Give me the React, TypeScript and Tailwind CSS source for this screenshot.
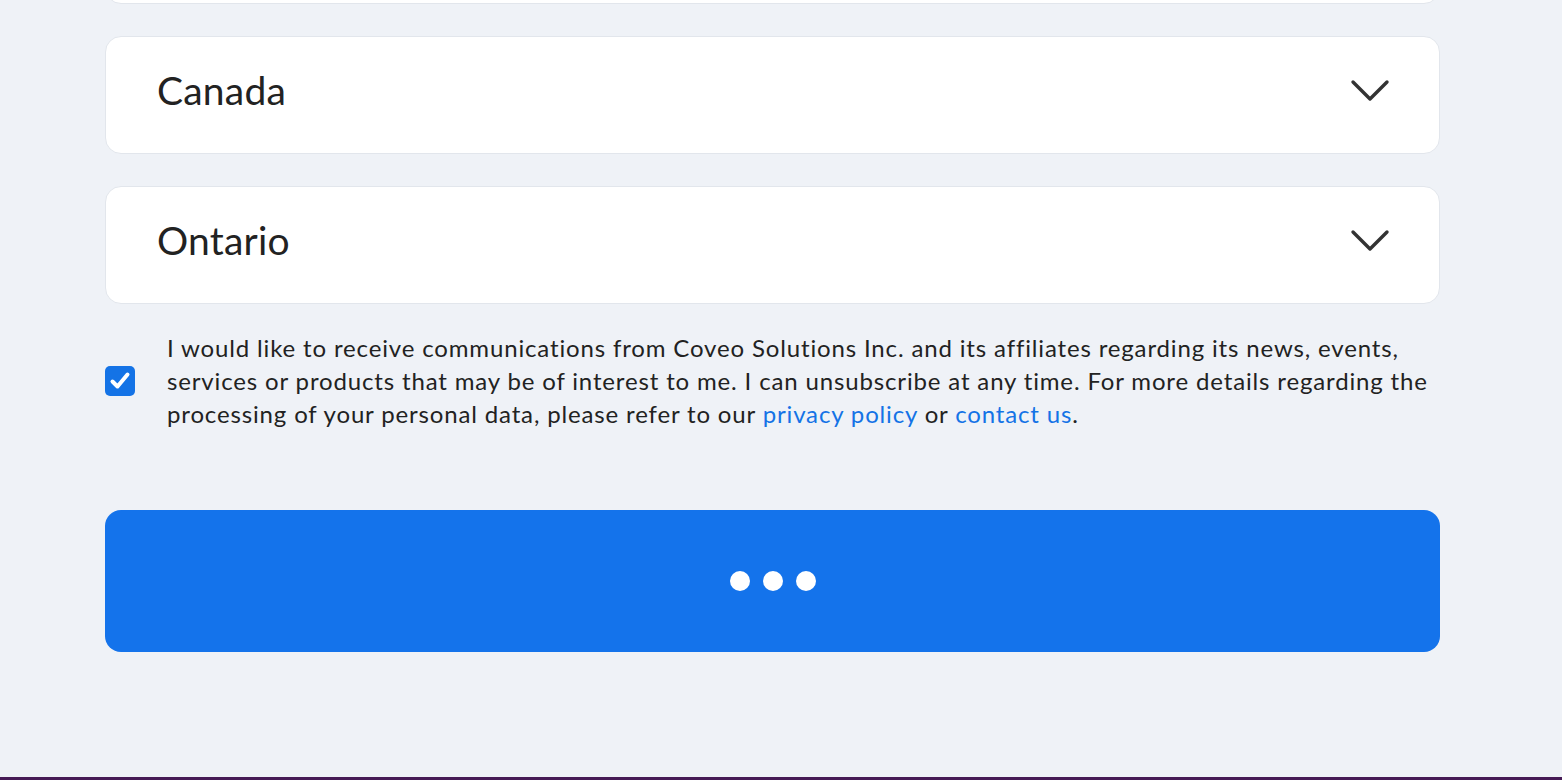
import React from "react";

function Chevron() {
  return (
    <svg width="40" height="24" viewBox="0 0 40 24" fill="none" className="shrink-0">
      <path d="M3 3 L20 20 L37 3" stroke="#333333" strokeWidth="3.4" strokeLinecap="round" strokeLinejoin="round" />
    </svg>
  );
}

function SelectCard({ label }: { label: string }) {
  return (
    <div className="h-[118px] rounded-[16px] border border-[#e2e6ec] bg-white flex items-center justify-between pl-[51px] pr-[49px] pb-[9px]">
      <span className="text-[39px] text-[#222222] leading-none tracking-[0.2px]">{label}</span>
      <Chevron />
    </div>
  );
}

export default function App() {
  return (
    <div
      className="w-full h-[780px] overflow-hidden bg-[#eff2f7] flex flex-col"
      style={{ fontFamily: "Lato, 'Noto Sans', sans-serif" }}
    >
      <div className="flex-1 w-[1335px] ml-[105px] flex flex-col">
        <div className="h-[118px] -mt-[114px] rounded-[16px] border border-[#e2e6ec] bg-white" />
        <div className="mt-[32px] flex flex-col gap-[32px]">
          <SelectCard label="Canada" />
          <SelectCard label="Ontario" />
        </div>
        <div className="mt-[27px] flex items-center gap-[32px]">
          <div className="w-[30px] h-[30px] rounded-[5px] bg-[#1473e6] flex items-center justify-center shrink-0">
            <svg width="24" height="24" viewBox="0 0 24 24" fill="none">
              <path d="M4.5 12.5 L9.5 17.5 L19.5 5.5" stroke="white" strokeWidth="4" strokeLinecap="round" strokeLinejoin="round" />
            </svg>
          </div>
          <p className="text-[24px] leading-[33px] tracking-[0.85px] text-[#222222]">
            I would like to receive communications from Coveo Solutions Inc. and its affiliates regarding its news, events, services or products that may be of interest to me. I can unsubscribe at any time. For more details regarding the processing of your personal data, please refer to our{" "}
            <a className="text-[#1473e6]">privacy policy</a> or <a className="text-[#1473e6]">contact us</a>.
          </p>
        </div>
        <button className="mt-[80px] h-[142px] w-full rounded-[16px] bg-[#1473eb] flex items-center justify-center gap-[13px]">
          <span className="w-[20px] h-[20px] rounded-full bg-white" />
          <span className="w-[20px] h-[20px] rounded-full bg-white" />
          <span className="w-[20px] h-[20px] rounded-full bg-white" />
        </button>
      </div>
      <div className="h-[3px] bg-[#461a55] shrink-0" />
    </div>
  );
}
